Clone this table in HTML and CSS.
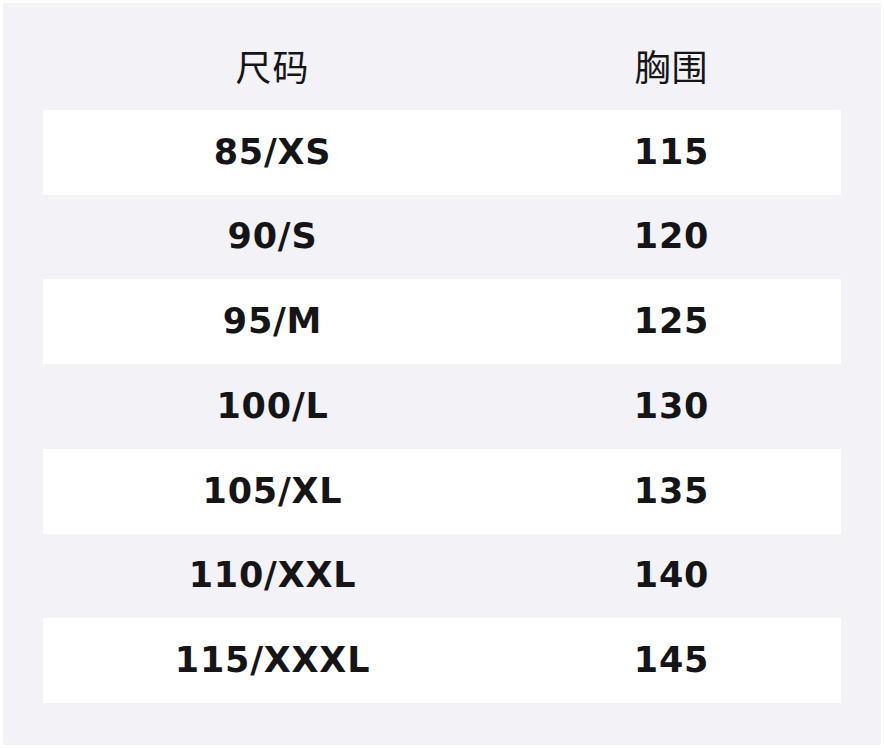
FILE: index.html
```html
<!DOCTYPE html>
<html lang="zh">
<head>
<meta charset="utf-8">
<link rel="stylesheet" href="styles.css">
</head>
<body>
<div class="panel">
  <div class="row head"><div class="cell">尺码</div><div class="cell">胸围</div></div>
  <div class="row alt"><div class="cell">85/XS</div><div class="cell">115</div></div>
  <div class="row"><div class="cell">90/S</div><div class="cell">120</div></div>
  <div class="row alt"><div class="cell">95/M</div><div class="cell">125</div></div>
  <div class="row"><div class="cell">100/L</div><div class="cell">130</div></div>
  <div class="row alt"><div class="cell">105/XL</div><div class="cell">135</div></div>
  <div class="row"><div class="cell">110/XXL</div><div class="cell">140</div></div>
  <div class="row alt"><div class="cell">115/XXXL</div><div class="cell">145</div></div>
</div>
</body>
</html>
```
FILE: styles.css
```css
html, body {
  margin: 0;
  padding: 0;
  background: #ffffff;
}
body {
  padding: 3px;
  font-family: "DejaVu Sans", "Noto Sans CJK SC", sans-serif;
  color: #151517;
}
.panel {
  width: 878px;
  height: 742px;
  box-sizing: border-box;
  background: #f2f2f7;
  padding: 22px 40px 42px;
}
.row {
  display: grid;
  grid-template-columns: 1fr 1fr;
  height: 84.75px;
  align-items: center;
}
.row.alt {
  background: #ffffff;
}
.cell {
  padding-left: 60px;
  padding-bottom: 0;
  text-align: center;
  font-size: 35px;
  font-weight: bold;
  letter-spacing: 0.8px;
  line-height: 1;
}
.head .cell {
  font-family: "Noto Sans CJK SC", sans-serif;
  font-weight: normal;
  font-size: 36px;
  letter-spacing: 1px;
  padding-bottom: 5px;
}
```
